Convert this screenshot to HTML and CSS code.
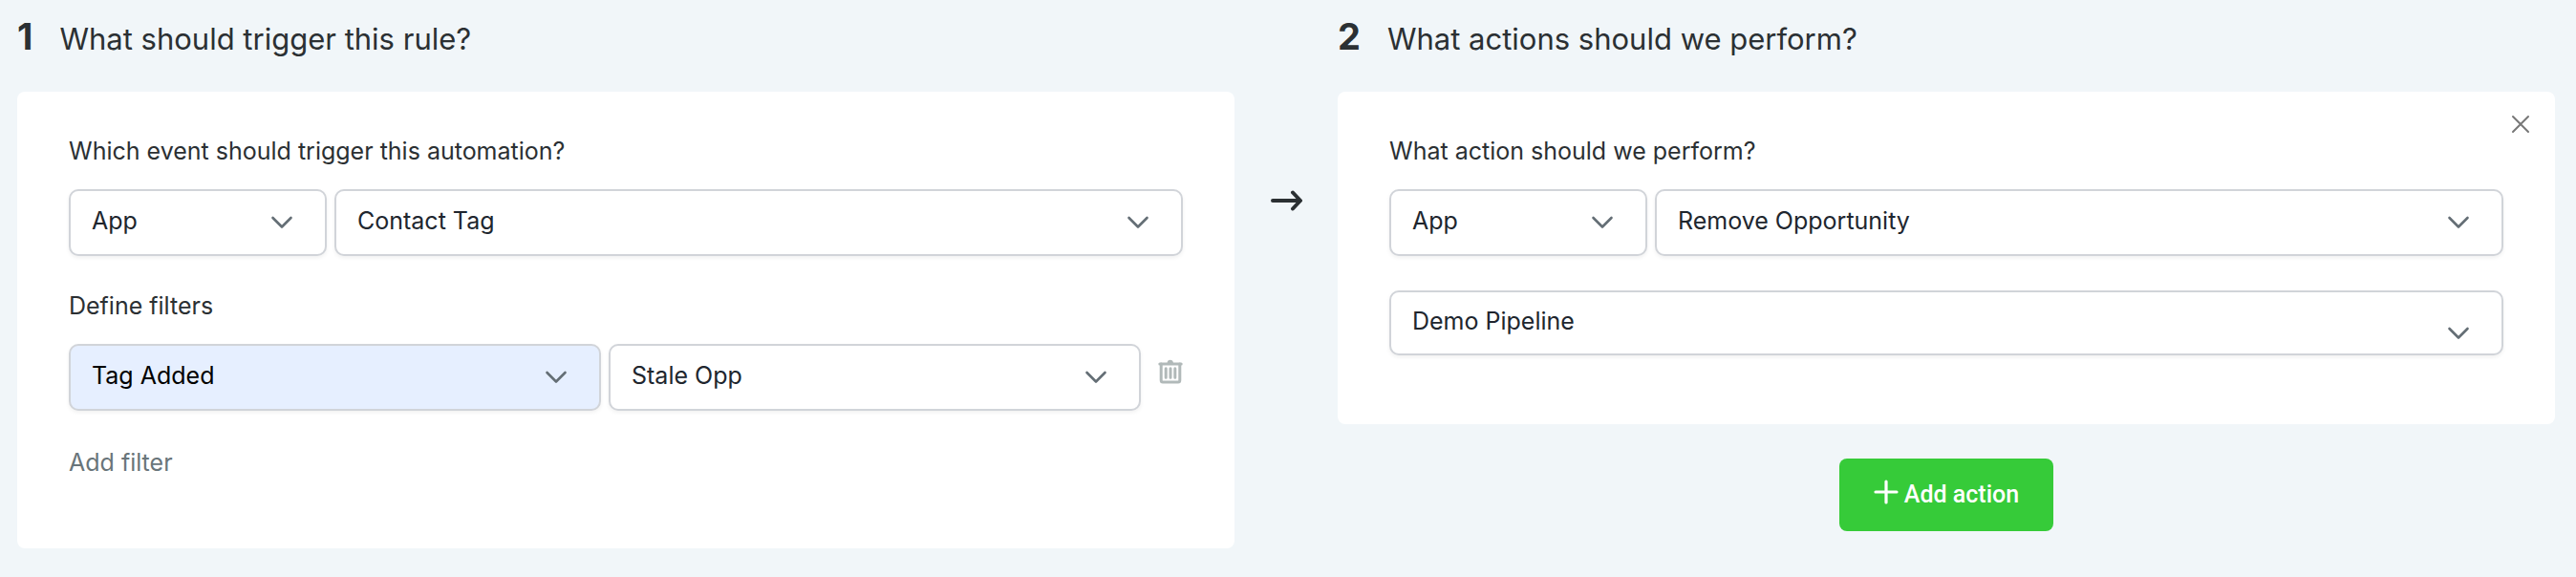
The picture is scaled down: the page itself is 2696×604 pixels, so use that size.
FILE: index.html
```html
<!DOCTYPE html>
<html lang="en">
<head>
  <meta charset="UTF-8">
  <meta name="viewport" content="width=device-width, initial-scale=1.0">
  <title>Automation Rule</title>
  <link rel="stylesheet" href="styles.css">
</head>
<body>
  <svg class="sprite" aria-hidden="true">
    <symbol id="chevron" viewBox="0 0 24 14">
      <path d="M2.5 2 L12 11.5 L21.5 2" fill="none" stroke="currentColor" stroke-width="2.6" stroke-linecap="round" stroke-linejoin="round"/>
    </symbol>
  </svg>

  <main class="rule">
    <section class="step">
      <h2 class="step-title"><span class="step-number">1</span>What should trigger this rule?</h2>
      <div class="card">
        <label class="field-label" for="triggerApp">Which event should trigger this automation?</label>
        <div class="row">
          <div class="select select-app">
            <select id="triggerApp"><option>App</option></select>
            <svg class="chevron"><use href="#chevron"/></svg>
          </div>
          <div class="select">
            <select id="triggerEvent" aria-label="Event"><option>Contact Tag</option></select>
            <svg class="chevron"><use href="#chevron"/></svg>
          </div>
        </div>

        <label class="field-label" for="filterType">Define filters</label>
        <div class="row">
          <div class="select selected">
            <select id="filterType"><option>Tag Added</option></select>
            <svg class="chevron"><use href="#chevron"/></svg>
          </div>
          <div class="select">
            <select id="filterTag" aria-label="Tag"><option>Stale Opp</option></select>
            <svg class="chevron"><use href="#chevron"/></svg>
          </div>
          <button type="button" class="icon-button delete" aria-label="Delete filter">
            <svg width="26" height="26" viewBox="0 0 26 26" fill="none" stroke="currentColor" stroke-linecap="round" stroke-linejoin="round">
              <path d="M9.5 4 C9.5 -0.5 16 -0.5 16 4 Z" fill="currentColor" stroke="none"/>
              <path d="M1.8 5 H24.2" stroke-width="3"/>
              <path d="M3.2 5 V22 Q3.2 24 5 24 H21 Q22.8 24 22.8 22 V5" stroke-width="3"/>
              <path d="M8.2 9.8 V19.2 M13 9.8 V19.2 M17.8 9.8 V19.2" stroke-width="3"/>
            </svg>
          </button>
        </div>

        <button type="button" class="add-filter">Add filter</button>
      </div>
    </section>

    <svg class="arrow" width="34" height="24" viewBox="0 0 34 24" aria-hidden="true">
      <path d="M3 12 H31 M24 3.5 L32 12 L24 20.5" fill="none" stroke="currentColor" stroke-width="4" stroke-linecap="round" stroke-linejoin="round"/>
    </svg>

    <section class="step">
      <h2 class="step-title"><span class="step-number">2</span>What actions should we perform?</h2>
      <div class="card">
        <button type="button" class="icon-button close" aria-label="Remove action">
          <svg width="20" height="20" viewBox="0 0 20 20">
            <path d="M2 2 L18 18 M18 2 L2 18" fill="none" stroke="currentColor" stroke-width="2" stroke-linecap="round"/>
          </svg>
        </button>
        <label class="field-label" for="actionApp">What action should we perform?</label>
        <div class="row">
          <div class="select select-app">
            <select id="actionApp"><option>App</option></select>
            <svg class="chevron"><use href="#chevron"/></svg>
          </div>
          <div class="select">
            <select id="actionType" aria-label="Action"><option>Remove Opportunity</option></select>
            <svg class="chevron"><use href="#chevron"/></svg>
          </div>
        </div>
        <div class="row">
          <div class="select pipeline">
            <select id="pipeline" aria-label="Pipeline"><option>Demo Pipeline</option></select>
            <svg class="chevron"><use href="#chevron"/></svg>
          </div>
        </div>
      </div>
      <button type="button" class="add-action">
        <svg width="26" height="26" viewBox="0 0 26 26" aria-hidden="true">
          <path d="M13 2 V24 M2 13 H24" fill="none" stroke="currentColor" stroke-width="3.2" stroke-linecap="round"/>
        </svg>
        Add action
      </button>
    </section>
  </main>
</body>
</html>
```

FILE: styles.css
```css
* {
  box-sizing: border-box;
}
body {
  margin: 0;
  background-color: #f1f6f9;
  color: #2b3033;
  font-family: Inter, "Liberation Sans", sans-serif;
  font-size: 25px;
}
button,
select {
  font: inherit;
  cursor: pointer;
}
.sprite {
  display: none;
}
.rule {
  display: grid;
  grid-template-columns: 1fr 108px 1fr;
  align-items: start;
  padding: 0 22px 28px 18px;
}
.step {
  display: flex;
  flex-direction: column;
}
.step-title {
  display: flex;
  align-items: baseline;
  gap: 28px;
  height: 96px;
  margin: 0;
  padding-top: 14px;
  font-size: 31px;
  font-weight: 400;
  line-height: 48px;
}
.step-number {
  font-size: 38px;
  font-weight: 700;
}
.card {
  position: relative;
  padding: 46px 54px 72px;
  background-color: #fff;
  border-radius: 8px;
}
.field-label {
  display: block;
  margin-bottom: 24px;
  line-height: 32px;
}
.row {
  display: flex;
  gap: 8px;
  margin-bottom: 36px;
}
.row:last-child {
  margin-bottom: 0;
}
.select {
  display: grid;
  flex: 1;
  align-items: center;
}
.select-app {
  flex: 0 0 270px;
}
.select select,
.select .chevron {
  grid-area: 1 / 1;
}
.select select {
  width: 100%;
  height: 70px;
  padding: 0 70px 4px 22px;
  appearance: none;
  background-color: #fff;
  color: #20262e;
  border: 2px solid #d1d4d9;
  border-radius: 10px;
  box-shadow: 0 2px 4px rgba(0, 0, 0, 0.06);
}
.selected select {
  background-color: #e6efff;
  color: #000;
}
.select .chevron {
  justify-self: end;
  width: 24px;
  height: 14px;
  margin-right: 35px;
  color: #646e75;
  pointer-events: none;
}
.pipeline {
  align-items: end;
}
.pipeline select {
  height: 68px;
}
.pipeline .chevron {
  margin-bottom: 16px;
}
.icon-button {
  display: flex;
  padding: 0;
  background: none;
  border: none;
}
.delete {
  align-self: flex-start;
  margin: 16px 0 0 10px;
  color: #b1b9b9;
}
.close {
  position: absolute;
  top: 24px;
  right: 26px;
  color: #777;
}
.add-filter {
  display: block;
  padding: 0;
  background: none;
  border: none;
  color: #69757a;
  line-height: 36px;
}
.arrow {
  justify-self: center;
  margin-top: 198px;
}
.add-action {
  display: flex;
  align-items: center;
  align-self: center;
  gap: 6px;
  height: 76px;
  margin-top: 36px;
  padding: 0 36px 2px;
  background-color: #36cb39;
  color: #fff;
  border: none;
  border-radius: 8px;
  font-family: Roboto, sans-serif;
  font-size: 25px;
  font-weight: 500;
}
.add-action svg {
  margin-bottom: 4px;
}
```
